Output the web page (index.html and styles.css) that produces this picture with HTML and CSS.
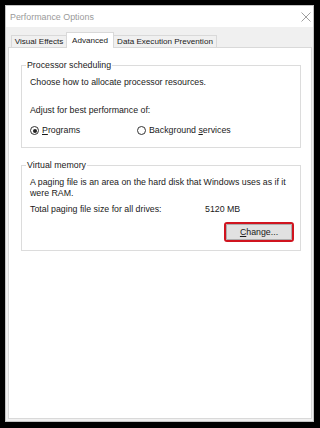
FILE: index.html
```html
<!DOCTYPE html>
<html>
<head>
<meta charset="utf-8">
<link rel="stylesheet" href="styles.css">
</head>
<body>
<div class="window">
  <div class="titlebar">
    <span class="title">Performance Options</span>
    <svg class="close" width="10" height="10" viewBox="0 0 10 10"><path d="M0.5 0.5L9.5 9.5M9.5 0.5L0.5 9.5" stroke="#a0a0a0" stroke-width="1" fill="none"/></svg>
  </div>
  <div class="tabbar">
    <div class="tab t1">Visual Effects</div>
    <div class="tab t2 active">Advanced</div>
    <div class="tab t3">Data Execution Prevention</div>
  </div>
  <div class="panel">
    <fieldset class="group g1">
      <legend>Processor scheduling</legend>
      <p class="line choose">Choose how to allocate processor resources.</p>
      <p class="line adj">Adjust for best performance of:</p>
      <div class="radios">
        <label class="radio r1"><span class="dot on"></span><span><u>P</u>rograms</span></label>
        <label class="radio"><span class="dot"></span><span>Background <u>s</u>ervices</span></label>
      </div>
    </fieldset>
    <fieldset class="group g2">
      <legend>Virtual memory</legend>
      <p class="para">A paging file is an area on the hard disk that Windows uses as if it were RAM.</p>
      <div class="total"><span class="tl">Total paging file size for all drives:</span><span>5120 MB</span></div>
      <div class="btnrow"><button class="btn"><u>C</u>hange...</button></div>
    </fieldset>
  </div>
</div>
</body>
</html>
```
FILE: styles.css
```css
html, body { margin: 0; padding: 0; }
body { background: #000; width: 320px; height: 428px; overflow: hidden; font-family: "Liberation Sans", Arial, sans-serif; font-size: 8.8px; color: #1a1a1a; }
.window { margin: 5px 0 0 5px; width: 307px; height: 415px; background: #f0f0f0; border: 1px solid #c4c4c4; display: flex; flex-direction: column; box-sizing: content-box; }
.titlebar { height: 21px; background: #fff; display: flex; align-items: center; justify-content: space-between; padding: 0 2px 0 4px; flex: none; }
.title { color: #9a9a9a; font-size: 8.9px; }
.close { margin-top: 1px; }
.tabbar { display: flex; padding: 0 0 0 5px; height: 20px; flex: none; align-items: flex-end; }
.tab { box-sizing: border-box; height: 12px; line-height: 11px; border: 1px solid #d9d9d9; border-bottom: none; background: #f0f0f0; font-size: 8.1px; margin-right: -1px; text-align: center; white-space: nowrap; }
.t1 { width: 56px; }
.t2 { width: 48px; }
.t3 { width: 104px; }
.tab.active { background: #fff; height: 16px; line-height: 15px; margin-bottom: -1px; position: relative; z-index: 1; }
.panel { flex: 1; margin: 0 1px 2px 2px; background: #fff; border: 1px solid #d9d9d9; padding: 12px 10px 0 12px; }
.group { margin: 0; border: 1px solid #dcdcdc; padding: 0 8px 0 8px; min-width: 0; }
.group legend { padding: 0 1px; margin-left: -4px; line-height: 10px; font-size: 8.8px; }
.g1 { padding-bottom: 11px; }
.g2 { margin-top: 12px; padding-bottom: 10px; }
.line { margin: 0; line-height: 11px; }
.choose { margin-top: 7px; }
.adj { margin-top: 17px; }
.radios { display: flex; margin-top: 9px; line-height: 11px; }
.radio { display: flex; align-items: center; gap: 3px; }
.r1 { width: 107px; }
.dot { width: 7px; height: 7px; border: 1px solid #333; border-radius: 50%; display: inline-flex; align-items: center; justify-content: center; box-sizing: content-box; }
.dot.on::after { content: ""; width: 4px; height: 4px; border-radius: 50%; background: #222; }
.para { margin: 7px 0 0 0; line-height: 11px; padding-right: 4px; }
.total { display: flex; margin-top: 5px; line-height: 11px; }
.tl { width: 175px; }
.btnrow { display: flex; justify-content: flex-end; margin-top: 9px; }
.btn { font-family: inherit; font-size: 8.8px; color: #1a1a1a; width: 66px; height: 16px; line-height: 14px; background: #e1e1e1; border: 1px solid #adadad; outline: 2px solid #d0141f; outline-offset: 0; border-radius: 1px; padding: 0; box-sizing: border-box; }
```
